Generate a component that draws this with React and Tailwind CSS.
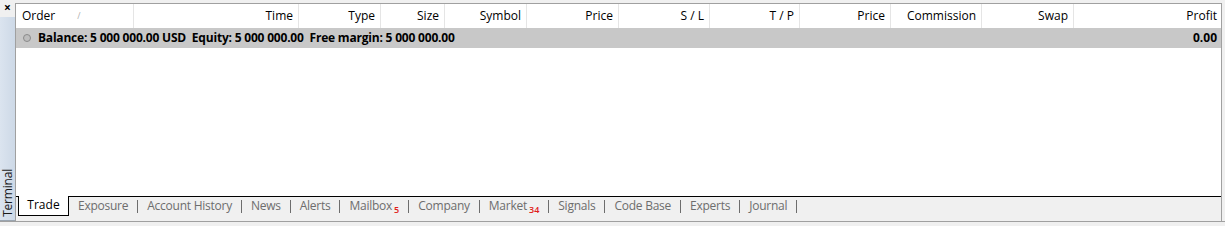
import React from "react";

const cols = [
  { label: "Time", w: 165 },
  { label: "Type", w: 82 },
  { label: "Size", w: 64 },
  { label: "Symbol", w: 82 },
  { label: "Price", w: 92 },
  { label: "S / L", w: 91 },
  { label: "T / P", w: 90 },
  { label: "Price", w: 91 },
  { label: "Commission", w: 91 },
  { label: "Swap", w: 92 },
];

const tabs = [
  { label: "Exposure" },
  { label: "Account History" },
  { label: "News" },
  { label: "Alerts" },
  { label: "Mailbox", badge: "5" },
  { label: "Company" },
  { label: "Market", badge: "34" },
  { label: "Signals" },
  { label: "Code Base" },
  { label: "Experts" },
  { label: "Journal" },
];

export default function App() {
  return (
    <div
      className="w-[1225px] h-[226px] bg-[#f0f0f0] flex flex-col overflow-hidden text-[12px] text-black"
      style={{ fontFamily: '"Open Sans", "Noto Sans", sans-serif' }}
    >
      <div className="flex h-[221px]">
        {/* sidebar */}
        <div className="w-[15px] flex flex-col">
          <div className="h-[17px] flex items-start justify-center pt-[1px] text-[12px] font-bold leading-[14px]">×</div>
          <div className="flex-1 bg-gradient-to-r from-[#dbe4ef] to-[#cdd9e7] flex flex-col justify-end items-center pb-[3px] border-b border-[#9aa5b1]">
            <span
              className="text-[12px] leading-[14px] text-[#1a1a1a] tracking-[-0.2px]"
              style={{ writingMode: "vertical-rl", transform: "rotate(180deg)" }}
            >
              Terminal
            </span>
          </div>
        </div>
        {/* panel */}
        <div className="flex-1 mt-[3px] mr-[3px] border-t border-l border-r border-[#a0a0a0] bg-white flex flex-col">
          {/* header */}
          <div className="h-[24px] flex items-center">
            <div className="w-[118px] h-full flex items-center pl-[6px] border-r border-[#e5e5e5]">
              <span>Order</span>
              <span className="ml-[22px] text-[#b0b0b0] text-[9px]">/</span>
            </div>
            {cols.map((c, i) => (
              <div
                key={i}
                className="h-full flex items-center justify-end pr-[5px] border-r border-[#e5e5e5]"
                style={{ width: c.w }}
              >
                {c.label}
              </div>
            ))}
            <div className="flex-1 h-full flex items-center justify-end pr-[4px]">Profit</div>
          </div>
          {/* balance row */}
          <div className="h-[20px] bg-[#c8c8c8] flex items-center font-bold">
            <span className="ml-[7px] w-[8px] h-[8px] rounded-full border border-[#8a8a8a] bg-[#bdbdbd] inline-block" />
            <span className="ml-[7px] whitespace-pre tracking-[-0.2px]">
              {"Balance: 5 000 000.00 USD  Equity: 5 000 000.00  Free margin: 5 000 000.00"}
            </span>
            <span className="ml-auto pr-[4px]">0.00</span>
          </div>
          <div className="flex-1 bg-white" />
          {/* tab bar */}
          <div className="h-[25px] bg-[#f0f0f0] border-t border-black flex items-start">
            <div className="ml-[2px] -mt-[1px] h-[20px] w-[51px] bg-white border-l border-r border-b border-black flex items-center justify-center pb-[1px]">
              Trade
            </div>
            <div className="flex items-center h-[19px] pb-[1px] text-[#6d6d6d] tracking-[-0.25px]">
              {tabs.map((t, i) => (
                <React.Fragment key={i}>
                  <span className="px-[9px] flex items-center">
                    {t.label}
                    {t.badge && (
                      <span className="ml-[2px] text-[#e0201a] text-[9px] font-semibold tracking-normal relative top-[4px]">
                        {t.badge}
                      </span>
                    )}
                  </span>
                  <span className="w-[1px] h-[13px] bg-[#6d6d6d]" />
                </React.Fragment>
              ))}
            </div>
          </div>
        </div>
      </div>
      <div className="flex-1 border-t border-[#a0a0a0] bg-[#f0f0f0]" />
    </div>
  );
}
